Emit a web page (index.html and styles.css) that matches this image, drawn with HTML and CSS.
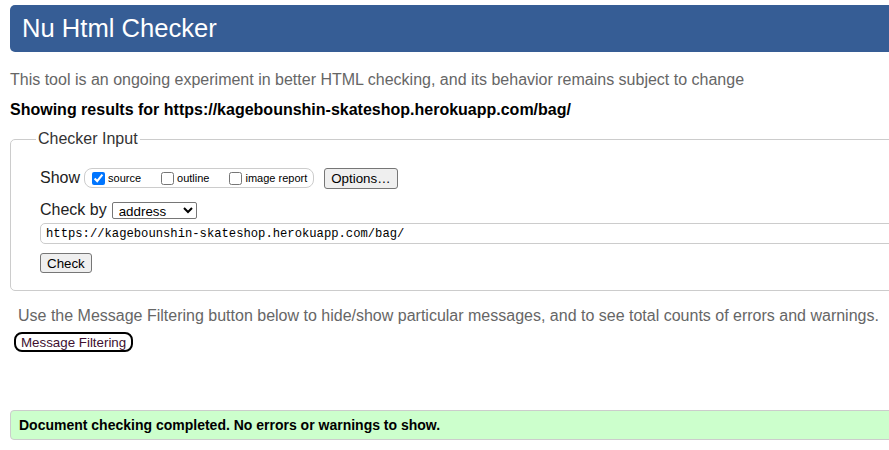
FILE: index.html
```html
<!DOCTYPE html>
<html lang="en">
<head>
<meta charset="utf-8">
<title>Nu Html Checker</title>
<link rel="stylesheet" href="styles.css">
</head>
<body>
<div class="page">
  <h1 class="title">Nu Html Checker</h1>
  <p class="intro">This tool is an ongoing experiment in better HTML checking, and its behavior remains subject to change</p>
  <p class="results">Showing results for https://kagebounshin-skateshop.herokuapp.com/bag/</p>
  <fieldset class="checker">
    <legend class="legend">Checker Input</legend>
    <div class="row show-row">
      <span class="label">Show</span>
      <span class="show-group">
        <label class="opt"><input type="checkbox" class="cb" checked><span>source</span></label>
        <label class="opt"><input type="checkbox" class="cb"><span>outline</span></label>
        <label class="opt"><input type="checkbox" class="cb"><span>image report</span></label>
      </span>
      <button class="btn options">Options…</button>
    </div>
    <div class="row by-row">
      <span class="label">Check by</span>
      <select class="sel"><option>address</option></select>
    </div>
    <input class="url" type="text" value="https://kagebounshin-skateshop.herokuapp.com/bag/">
    <button class="btn check">Check</button>
  </fieldset>
  <p class="filter-note">Use the Message Filtering button below to hide/show particular messages, and to see total counts of errors and warnings.</p>
  <button class="filter-btn">Message Filtering</button>
  <div class="success">Document checking completed. No errors or warnings to show.</div>
</div>
</body>
</html>
```
FILE: styles.css
```css
html, body {
  margin: 0;
  padding: 0;
  overflow: hidden;
  background: #fff;
}
body {
  font-family: "Liberation Sans", Arial, sans-serif;
  font-size: 16px;
  color: #000;
}
.page {
  width: 1100px;
  padding-left: 10px;
}
.title {
  margin: 5px 0 0 0;
  height: 47px;
  box-sizing: border-box;
  padding: 8px 0 0 12px;
  background: #365d95;
  color: #fff;
  font-weight: normal;
  font-size: 25.6px;
  line-height: 30px;
  border-radius: 5px;
}
.intro {
  margin: 19px 0 0 0;
  line-height: 18px;
  color: #666;
}
.results {
  margin: 12px 0 0 0;
  line-height: 18px;
  font-weight: bold;
}
.checker {
  margin: 11px 0 0 0;
  padding: 0 0 17px 29px;
  border: 1px solid #ccc;
  border-radius: 5px;
}
.legend {
  padding: 0 2px;
  margin-left: -4px;
  line-height: 18px;
  color: #333;
}
.row {
  display: flex;
  align-items: center;
}
.show-row {
  margin-top: 19px;
  height: 22px;
}
.label {
  line-height: 18px;
  color: #222;
}
.show-group {
  display: flex;
  align-items: center;
  margin-left: 4px;
  height: 18px;
  border: 1px solid #ccc;
  border-radius: 8px;
  padding: 0 6px 0 7px;
  font-size: 11px;
}
.opt {
  display: flex;
  align-items: center;
  margin-right: 20px;
}
.opt:last-child {
  margin-right: 0;
}
.cb {
  width: 13px;
  height: 13px;
  margin: 0 3px 0 0;
}
.btn {
  font-family: "Liberation Sans", Arial, sans-serif;
  font-size: 13.33px;
  background: #efefef;
  border: 1px solid #767676;
  border-radius: 3px;
  color: #000;
  padding: 1px 6px;
}
.options {
  margin-left: 10px;
  height: 21px;
}
.by-row {
  margin-top: 11px;
  height: 20px;
}
.sel {
  margin-left: 5px;
  width: 85px;
  height: 17px;
  font-family: "Liberation Sans", Arial, sans-serif;
  font-size: 13.33px;
  border: 1px solid #767676;
  border-radius: 2px;
  background: #fff;
  padding: 0 0 0 2px;
}
.url {
  display: block;
  margin: 3px 0 0 0;
  width: 1000px;
  height: 21px;
  box-sizing: border-box;
  border: 1px solid #ccc;
  border-radius: 5px;
  padding: 0 5px;
  font-family: "Liberation Mono", "DejaVu Sans Mono", monospace;
  font-size: 12.2px;
  color: #000;
}
.check {
  display: block;
  margin-top: 9px;
  height: 20px;
}
.filter-note {
  margin: 16px 0 0 8px;
  line-height: 18px;
  color: #666;
}
.filter-btn {
  display: block;
  margin: 7px 0 0 4px;
  height: 20px;
  padding: 0 5px;
  font-family: "Liberation Sans", Arial, sans-serif;
  font-size: 13.33px;
  color: #401030;
  background: #fff;
  border: 2px solid #000;
  border-radius: 8px;
}
.success {
  margin-top: 58px;
  height: 30px;
  box-sizing: border-box;
  padding: 0 0 0 8px;
  line-height: 28px;
  background: #ccffcc;
  border: 1px solid #ccc;
  border-radius: 4px;
  font-weight: bold;
  font-size: 14px;
}
```
